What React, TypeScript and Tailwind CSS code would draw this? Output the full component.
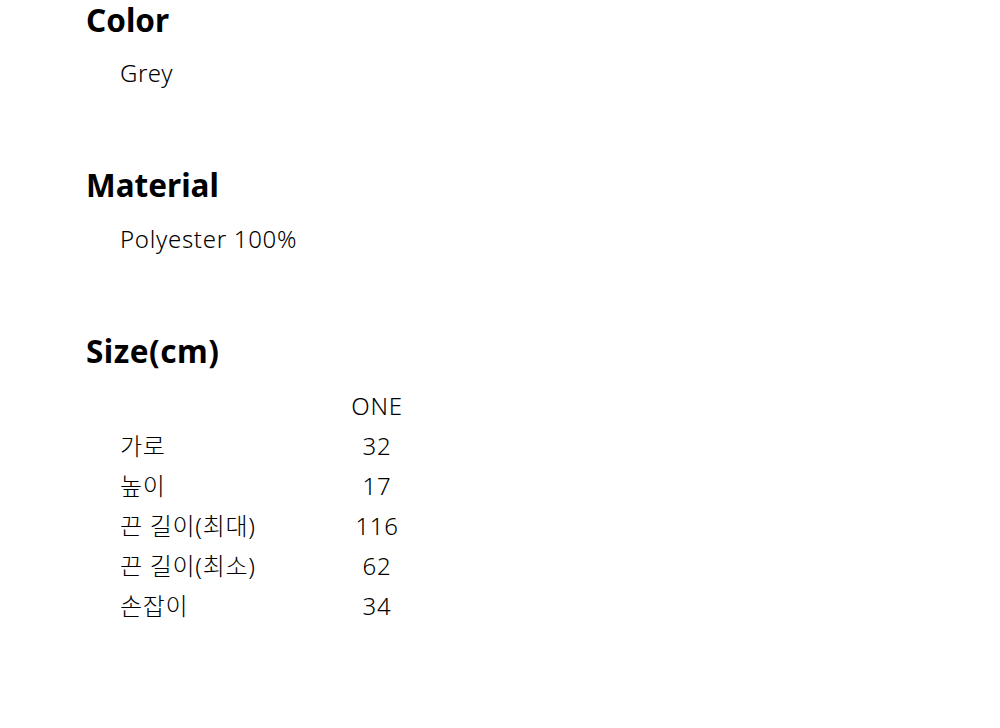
export default function App() {
  const rows: [string, string][] = [
    ["가로", "32"],
    ["높이", "17"],
    ["끈 길이(최대)", "116"],
    ["끈 길이(최소)", "62"],
    ["손잡이", "34"],
  ];
  const font = { fontFamily: '"Noto Sans", "Noto Sans CJK KR", sans-serif' };
  return (
    <div className="w-[1000px] h-[728px] bg-white text-black" style={font}>
      <div className="pl-[86px]">
        <h2 className="text-[31.5px] font-bold leading-[40px]">Color</h2>
        <div className="pl-[34px] mt-[13px] text-[24px] font-light tracking-[0.7px] leading-[40px]">Grey</div>
        <h2 className="mt-[73px] text-[31.5px] font-bold leading-[38px]">Material</h2>
        <div className="pl-[34px] mt-[15px] text-[24px] font-light tracking-[0.7px] leading-[40px]">Polyester 100%</div>
        <h2 className="mt-[73px] text-[31.5px] font-bold leading-[38px] tracking-[0.5px]">Size(cm)</h2>
        <div className="pl-[34px] mt-[16px] text-[24px] font-light tracking-[0.7px]">
          <div className="grid grid-cols-[214px_86px] leading-[40px]">
            <div></div>
            <div className="text-center">ONE</div>
            {rows.map(([k, v]) => (
              <>
                <div key={k}>{k}</div>
                <div key={k + "v"} className="text-center">{v}</div>
              </>
            ))}
          </div>
        </div>
      </div>
    </div>
  );
}
